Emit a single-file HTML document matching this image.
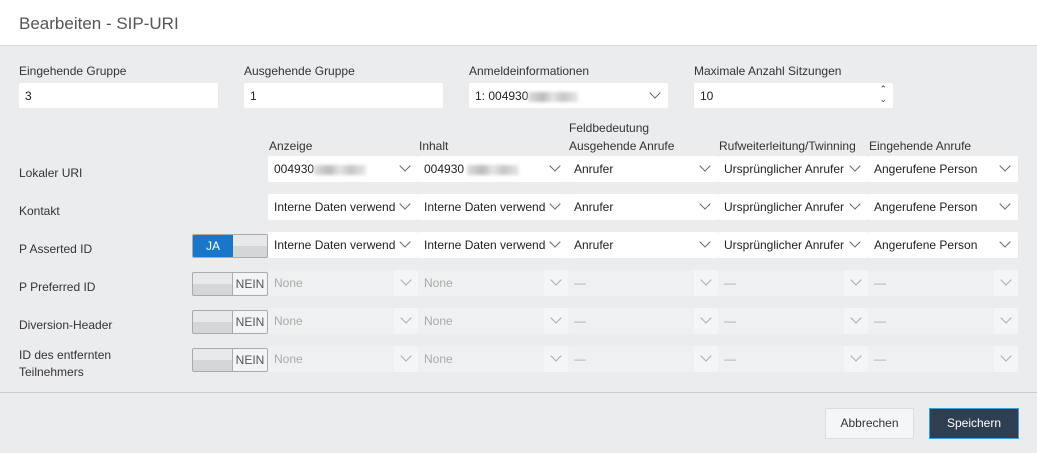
<!DOCTYPE html>
<html><head><meta charset="utf-8"><style>
*{box-sizing:border-box;margin:0;padding:0}
body{width:1037px;height:453px;background:#ebecee;font-family:"Liberation Sans",sans-serif;font-size:12px;color:#222;position:relative;overflow:hidden}
.hd{position:absolute;left:0;top:0;width:1037px;height:46px;background:#fff;border-bottom:1px solid #d8d9db}
.hd h1{position:absolute;left:19px;top:14px;font-size:17px;font-weight:normal;color:#555}
.a{position:absolute;white-space:nowrap}
.lb{color:#333}
.in{position:absolute;height:25px;background:#fff;border-radius:2px;padding:6px 0 0 6px;white-space:nowrap;overflow:hidden}
.s{position:absolute;width:150px;height:26px;background:#fff;padding:6px 0 0 6px;white-space:nowrap;overflow:hidden;border-radius:2px}
.s span.t{display:inline-block;width:122px;overflow:hidden}
.s i{position:absolute;right:6px;top:5px;width:14px;height:14px}
.s i:after{content:"";position:absolute;left:3px;top:1px;width:7px;height:7px;border-right:1px solid #666;border-bottom:1px solid #666;transform:rotate(45deg)}
.d{background:#eff0f1;color:#aaa}
.d i{background:#f4f5f6;right:0;top:0;width:24px;height:26px}
.d i:after{left:8px;top:6px;border-color:#aaa}
.bl{display:inline-block;width:58px;height:10px;background:linear-gradient(90deg,#ddd,#bbb 30%,#e5e5e5 50%,#c5c5c5 70%,#e8e8e8);filter:blur(1.5px);vertical-align:middle}
.tg{position:absolute;left:192px;width:76px;height:24px;border:1px solid #aaa;border-radius:2px;background:linear-gradient(#e8e9ea 50%,#d5d6d8 50%);overflow:hidden}
.tg .ja{position:absolute;left:0;top:0;width:40px;height:22px;background:#1877c9;color:#fff;text-align:center;line-height:22px}
.tg .ne{position:absolute;right:0;top:0;width:35px;height:22px;background:#f3f4f5;border-left:1px solid #aaa;color:#555;text-align:center;line-height:22px}
.ft{position:absolute;left:0;top:392px;width:1037px;border-top:1px solid #ccc}
.b1{position:absolute;left:825px;top:408px;width:89px;height:31px;background:#f5f6f8;border:1px solid #ddd;text-align:center;line-height:29px;color:#333}
.b2{position:absolute;left:929px;top:408px;width:90px;height:31px;background:#2f3f51;border:1px solid #3aa0e0;text-align:center;line-height:29px;color:#fff}
</style></head><body>
<div class="hd"><h1>Bearbeiten - SIP-URI</h1></div>

<div class="a lb" style="left:19px;top:64px">Eingehende Gruppe</div>
<div class="a lb" style="left:244px;top:64px">Ausgehende Gruppe</div>
<div class="a lb" style="left:469px;top:64px">Anmeldeinformationen</div>
<div class="a lb" style="left:694px;top:64px">Maximale Anzahl Sitzungen</div>
<div class="in" style="left:19px;top:83px;width:199px">3</div>
<div class="in" style="left:244px;top:83px;width:199px">1</div>
<div class="s" style="left:469px;top:83px;width:199px;height:25px">1: 004930<span class="bl" style="width:50px"></span><i></i></div>
<div class="in" style="left:694px;top:83px;width:199px">10<span style="position:absolute;right:6px;top:1px;font-size:9px;line-height:10px;color:#444">&#8963;<br>&#8964;</span></div>

<div class="a lb" style="left:269px;top:139px">Anzeige</div>
<div class="a lb" style="left:419px;top:139px">Inhalt</div>
<div class="a lb" style="left:569px;top:121px">Feldbedeutung</div>
<div class="a lb" style="left:569px;top:139px">Ausgehende Anrufe</div>
<div class="a lb" style="left:719px;top:139px">Rufweiterleitung/Twinning</div>
<div class="a lb" style="left:869px;top:139px">Eingehende Anrufe</div>

<div class="a lb" style="left:19px;top:166px">Lokaler URI</div>
<div class="a lb" style="left:19px;top:204px">Kontakt</div>
<div class="a lb" style="left:19px;top:242px">P Asserted ID</div>
<div class="a lb" style="left:19px;top:280px">P Preferred ID</div>
<div class="a lb" style="left:19px;top:318px">Diversion-Header</div>
<div class="a lb" style="left:19px;top:347px;line-height:17px">ID des entfernten<br>Teilnehmers</div>

<div class="s" style="left:268px;top:156px">004930<span class="bl" style="width:52px"></span><i></i></div>
<div class="s" style="left:418px;top:156px">004930 <span class="bl" style="width:52px"></span><i></i></div>
<div class="s" style="left:568px;top:156px"><span class="t">Anrufer</span><i></i></div>
<div class="s" style="left:718px;top:156px"><span class="t">Ursprünglicher Anrufer</span><i></i></div>
<div class="s" style="left:868px;top:156px"><span class="t">Angerufene Person</span><i></i></div>

<div class="s" style="left:268px;top:194px"><span class="t">Interne Daten verwenden</span><i></i></div>
<div class="s" style="left:418px;top:194px"><span class="t">Interne Daten verwenden</span><i></i></div>
<div class="s" style="left:568px;top:194px"><span class="t">Anrufer</span><i></i></div>
<div class="s" style="left:718px;top:194px"><span class="t">Ursprünglicher Anrufer</span><i></i></div>
<div class="s" style="left:868px;top:194px"><span class="t">Angerufene Person</span><i></i></div>

<div class="tg" style="top:234px"><div class="ja">JA</div></div>
<div class="s" style="left:268px;top:232px"><span class="t">Interne Daten verwenden</span><i></i></div>
<div class="s" style="left:418px;top:232px"><span class="t">Interne Daten verwenden</span><i></i></div>
<div class="s" style="left:568px;top:232px"><span class="t">Anrufer</span><i></i></div>
<div class="s" style="left:718px;top:232px"><span class="t">Ursprünglicher Anrufer</span><i></i></div>
<div class="s" style="left:868px;top:232px"><span class="t">Angerufene Person</span><i></i></div>

<div class="tg" style="top:272px"><div class="ne">NEIN</div></div>
<div class="s d" style="left:268px;top:270px">None<i></i></div>
<div class="s d" style="left:418px;top:270px">None<i></i></div>
<div class="s d" style="left:568px;top:270px">—<i></i></div>
<div class="s d" style="left:718px;top:270px">—<i></i></div>
<div class="s d" style="left:868px;top:270px">—<i></i></div>

<div class="tg" style="top:310px"><div class="ne">NEIN</div></div>
<div class="s d" style="left:268px;top:308px">None<i></i></div>
<div class="s d" style="left:418px;top:308px">None<i></i></div>
<div class="s d" style="left:568px;top:308px">—<i></i></div>
<div class="s d" style="left:718px;top:308px">—<i></i></div>
<div class="s d" style="left:868px;top:308px">—<i></i></div>

<div class="tg" style="top:348px"><div class="ne">NEIN</div></div>
<div class="s d" style="left:268px;top:346px">None<i></i></div>
<div class="s d" style="left:418px;top:346px">None<i></i></div>
<div class="s d" style="left:568px;top:346px">—<i></i></div>
<div class="s d" style="left:718px;top:346px">—<i></i></div>
<div class="s d" style="left:868px;top:346px">—<i></i></div>

<div class="ft"></div>
<div class="b1">Abbrechen</div>
<div class="b2">Speichern</div>
</body></html>
